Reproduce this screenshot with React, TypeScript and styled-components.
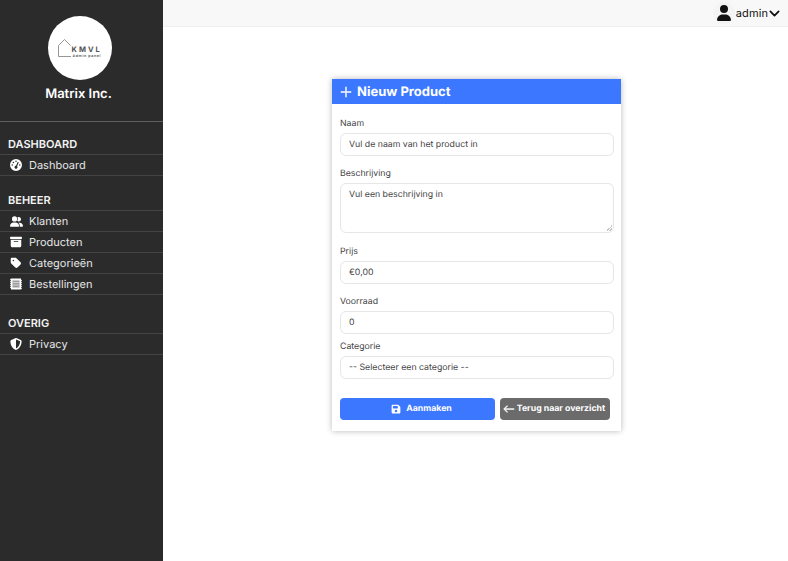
import styled, { createGlobalStyle } from "styled-components"
import {
  FaBoxArchive,
  FaGaugeHigh,
  FaFloppyDisk,
  FaShieldHalved,
  FaTag,
  FaUser,
  FaUserGroup,
} from "react-icons/fa6"
import { BsArrowLeft, BsChevronDown, BsPlusLg } from "react-icons/bs"

const GlobalStyle = createGlobalStyle`
  * { box-sizing: border-box; }
  body {
    margin: 0;
    font-family: Inter, "Liberation Sans", sans-serif;
    text-rendering: geometricPrecision;
    background: #fff;
    color: #333;
  }
`

function OrdersIcon() {
  return (
    <svg width="12" height="12" viewBox="0 0 12 12">
      <path
        d="M1 0.5H11V1.5L12 2.5L11 3.5L12 4.5L11 5.5L12 6.5L11 7.5L12 8.5L11 9.5L12 10.5L11 11.5H1V10.5L0 9.5L1 8.5L0 7.5L1 6.5L0 5.5L1 4.5L0 3.5L1 2.5L0 1.5Z"
        fill="#fff"
      />
      <rect x="2.5" y="2.5" width="7" height="7" fill="#9a9a9a" />
      <path d="M2.5 4.5H9.5M2.5 7H9.5" stroke="#e4e4e4" strokeWidth="0.8" />
    </svg>
  )
}

const menu = [
  {
    title: "DASHBOARD",
    gap: 0,
    items: [{ label: "Dashboard", icon: <FaGaugeHigh size={12} /> }],
  },
  {
    title: "BEHEER",
    gap: 2,
    items: [
      { label: "Klanten", icon: <FaUserGroup size={13} /> },
      { label: "Producten", icon: <FaBoxArchive size={12} /> },
      { label: "Categorieën", icon: <FaTag size={12} /> },
      { label: "Bestellingen", icon: <OrdersIcon /> },
    ],
  },
  {
    title: "OVERIG",
    gap: 6,
    items: [{ label: "Privacy", icon: <FaShieldHalved size={12} /> }],
  },
]

function Logo() {
  return (
    <LogoCircle>
      <svg width="46" height="20" viewBox="0 0 46 20">
        <path
          d="M1.5 18.5V7.5L7.5 1.5L13.5 7.5M1.5 18.5H14"
          fill="none"
          stroke="#8a8a8a"
          strokeWidth="0.9"
        />
        <text x="14.5" y="13.5" fontSize="7.5" fontWeight="700" letterSpacing="2" fill="#555" fontFamily="Inter, sans-serif">
          KMVL
        </text>
        <text x="15.5" y="18.5" fontSize="3.6" fontWeight="700" letterSpacing="0.6" fill="#666" fontFamily="Inter, sans-serif">
          Admin panel
        </text>
      </svg>
    </LogoCircle>
  )
}

function App() {
  return (
    <Page>
      <GlobalStyle />
      <Sidebar>
        <Brand>
          <Logo />
          <BrandName>Matrix Inc.</BrandName>
        </Brand>
        {menu.map((section) => (
          <Section key={section.title} $gap={section.gap}>
            <SectionTitle>{section.title}</SectionTitle>
            {section.items.map((item) => (
              <MenuItem key={item.label}>
                <MenuIcon>{item.icon}</MenuIcon>
                {item.label}
              </MenuItem>
            ))}
          </Section>
        ))}
      </Sidebar>
      <Main>
        <Topbar>
          <UserBadge>
            <FaUser />
          </UserBadge>
          <UserName>admin</UserName>
          <BsChevronDown size={11} strokeWidth={1.5} />
        </Topbar>
        <Content>
          <Card>
            <CardHeader>
              <BsPlusLg size={14} strokeWidth={0.6} />
              Nieuw Product
            </CardHeader>
            <Form>
              <Field $after={11}>
                <Label>Naam</Label>
                <Input placeholder="Vul de naam van het product in" />
              </Field>
              <Field $after={12}>
                <Label>Beschrijving</Label>
                <TextArea placeholder="Vul een beschrijving in" />
              </Field>
              <Field $after={11}>
                <Label>Prijs</Label>
                <Input placeholder="€0,00" />
              </Field>
              <Field $after={6}>
                <Label>Voorraad</Label>
                <Input placeholder="0" />
              </Field>
              <Field $after={19}>
                <Label>Categorie</Label>
                <Select defaultValue="">
                  <option value="">-- Selecteer een categorie --</option>
                </Select>
              </Field>
              <Actions>
                <PrimaryButton type="button">
                  <FaFloppyDisk size={10} />
                  Aanmaken
                </PrimaryButton>
                <BackButton type="button">
                  <BsArrowLeft size={12} strokeWidth={0.8} />
                  Terug naar overzicht
                </BackButton>
              </Actions>
            </Form>
          </Card>
        </Content>
      </Main>
    </Page>
  )
}

export default App

const Page = styled.div`
  display: flex;
  min-height: 100vh;
`

const Sidebar = styled.aside`
  width: 163px;
  flex-shrink: 0;
  background: #2b2b2c;
  color: #fff;
`

const Brand = styled.div`
  display: flex;
  flex-direction: column;
  align-items: center;
  height: 122px;
  padding: 16px 3px 0 0;
  border-bottom: 1px solid #5e5e5e;
`

const LogoCircle = styled.div`
  width: 64px;
  height: 64px;
  border-radius: 50%;
  background: #fff;
  display: flex;
  align-items: center;
  justify-content: center;
`

const BrandName = styled.div`
  margin-top: 5px;
  margin-right: 3px;
  font-size: 13px;
  line-height: 19px;
  font-weight: 600;
`

const Section = styled.section<{ $gap: number }>`
  margin-top: ${(p) => p.$gap}px;
`

const SectionTitle = styled.h2`
  margin: 0;
  height: 32px;
  padding: 16px 0 0 8px;
  font-size: 11px;
  line-height: 13px;
  font-weight: 600;
  color: #f4f4f4;
`

const MenuItem = styled.div`
  display: flex;
  align-items: center;
  height: 21px;
  padding-left: 9px;
  border-top: 1px solid #444445;
  font-size: 11px;
  color: #e6e6e6;

  &:last-child {
    border-bottom: 1px solid #444445;
    height: 22px;
  }
`

const MenuIcon = styled.span`
  display: flex;
  justify-content: center;
  width: 14px;
  margin-right: 6px;
  color: #fff;
`

const Main = styled.main`
  flex: 1;
  display: flex;
  flex-direction: column;
`

const Topbar = styled.header`
  height: 27px;
  display: flex;
  align-items: center;
  justify-content: flex-end;
  gap: 1px;
  padding-right: 8px;
  background: #f8f8f8;
  border-bottom: 1px solid #f0f0f0;
  color: #111;
`

const UserBadge = styled.span`
  width: 22px;
  height: 22px;
  border-radius: 50%;
  display: flex;
  align-items: center;
  justify-content: center;
  background: #f4f4f4;
  font-size: 16px;
`

const UserName = styled.span`
  font-size: 11px;
  letter-spacing: 0.1px;
`

const Content = styled.div`
  flex: 1;
  padding: 52px 0 0 169px;
`

const Card = styled.div`
  width: 289px;
  height: 352px;
  background: #fff;
  box-shadow: 0 0 6px rgba(0, 0, 0, 0.28);
`

const CardHeader = styled.div`
  height: 25px;
  display: flex;
  align-items: center;
  gap: 4px;
  padding-left: 7px;
  background: #3b78ff;
  color: #fff;
  font-size: 13px;
  font-weight: 700;
`

const Form = styled.form`
  padding: 13px 7px 0 8px;
`

const Field = styled.div<{ $after: number }>`
  display: flex;
  flex-direction: column;
  margin-bottom: ${(p) => p.$after}px;
`

const Label = styled.label`
  height: 16px;
  font-size: 8.75px;
  line-height: 14px;
  color: #444;
`

const controlStyles = `
  width: 100%;
  border: 1px solid #e6e6e6;
  border-radius: 6px;
  background: #fff;
  padding: 0 8px;
  font-family: Inter, "Liberation Sans", sans-serif;
  font-size: 8.75px;
  color: #444;
  outline: none;
  text-rendering: geometricPrecision;

  &::placeholder {
    color: #444;
    opacity: 1;
  }
`

const Input = styled.input`
  ${controlStyles}
  height: 23px;
`

const TextArea = styled.textarea`
  ${controlStyles}
  display: block;
  height: 50px;
  padding-top: 5px;
  line-height: 12px;
  resize: vertical;

  &::-webkit-resizer {
    background: linear-gradient(
        135deg,
        transparent 50%,
        #c8c8c8 50%,
        #c8c8c8 60%,
        transparent 60%,
        transparent 72%,
        #c8c8c8 72%,
        #c8c8c8 84%,
        transparent 84%
      )
      no-repeat right 1px bottom 1px / 6px 6px;
  }
`

const Select = styled.select`
  ${controlStyles}
  height: 23px;
  appearance: none;
`

const Actions = styled.div`
  display: flex;
  gap: 5px;
`

const buttonStyles = `
  height: 22px;
  border: none;
  border-radius: 4px;
  display: flex;
  align-items: center;
  justify-content: center;
  color: #fff;
  font-family: Inter, "Liberation Sans", sans-serif;
  font-size: 8.75px;
  font-weight: 700;
  text-rendering: geometricPrecision;
`

const PrimaryButton = styled.button`
  ${buttonStyles}
  width: 155px;
  gap: 5px;
  padding: 0 0 0 8px;
  background: #3b78ff;
`

const BackButton = styled.button`
  ${buttonStyles}
  width: 110px;
  gap: 2px;
  padding: 0 2px 0 0;
  background: #6b6b6b;
`
